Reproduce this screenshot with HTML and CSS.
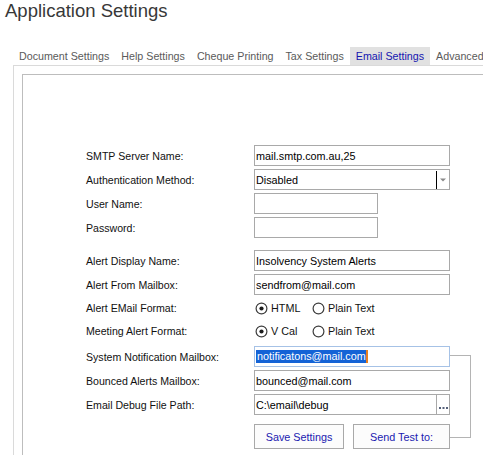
FILE: index.html
```html
<!DOCTYPE html>
<html lang="en">
<head>
<meta charset="utf-8">
<title>Application Settings</title>
<link rel="stylesheet" href="styles.css">
</head>
<body>
<h1 class="title">Application Settings</h1>
<nav class="tabs">
  <span class="tab">Document Settings</span>
  <span class="tab">Help Settings</span>
  <span class="tab">Cheque Printing</span>
  <span class="tab">Tax Settings</span>
  <span class="tab active">Email Settings</span>
  <span class="tab">Advanced</span>
</nav>
<div class="panel">
  <div class="pane">
    <div class="form">
      <div class="group">
        <span class="label">SMTP Server Name:</span>
        <div class="field">mail.smtp.com.au,25</div>
        <span class="label">Authentication Method:</span>
        <div class="field select">
          <span class="value">Disabled</span>
          <span class="drop"><svg width="6" height="4" viewBox="0 0 6 4"><path d="M0 0.5H6L3 3.5Z" fill="#8a8a8a"/></svg></span>
        </div>
        <span class="label">User Name:</span>
        <div class="field short"></div>
        <span class="label">Password:</span>
        <div class="field short"></div>
      </div>
      <div class="group g2">
        <span class="label">Alert Display Name:</span>
        <div class="field">Insolvency System Alerts</div>
        <span class="label">Alert From Mailbox:</span>
        <div class="field">sendfrom@mail.com</div>
        <span class="label">Alert EMail Format:</span>
        <div class="radios">
          <span class="radio first"><svg class="dot" width="13" height="13" viewBox="0 0 13 13"><circle cx="6.5" cy="6.5" r="5.4" fill="#fff" stroke="#3c3c3c" stroke-width="1.2"/><circle cx="6.5" cy="6.5" r="2.1" fill="#1c1c1c"/></svg>HTML</span>
          <span class="radio"><svg class="dot" width="13" height="13" viewBox="0 0 13 13"><circle cx="6.5" cy="6.5" r="5.4" fill="#fff" stroke="#3c3c3c" stroke-width="1.2"/></svg>Plain Text</span>
        </div>
        <span class="label">Meeting Alert Format:</span>
        <div class="radios">
          <span class="radio first"><svg class="dot" width="13" height="13" viewBox="0 0 13 13"><circle cx="6.5" cy="6.5" r="5.4" fill="#fff" stroke="#3c3c3c" stroke-width="1.2"/><circle cx="6.5" cy="6.5" r="2.1" fill="#1c1c1c"/></svg>V Cal</span>
          <span class="radio"><svg class="dot" width="13" height="13" viewBox="0 0 13 13"><circle cx="6.5" cy="6.5" r="5.4" fill="#fff" stroke="#3c3c3c" stroke-width="1.2"/></svg>Plain Text</span>
        </div>
      </div>
      <div class="group g3">
        <span class="label">System Notification Mailbox:</span>
        <div class="field focused"><span class="selected">notificatons@mail.com</span><span class="caret"></span></div>
        <span class="label">Bounced Alerts Mailbox:</span>
        <div class="field">bounced@mail.com</div>
        <span class="label">Email Debug File Path:</span>
        <div class="field browse">
          <span class="value">C:\email\debug</span>
          <span class="dots"><svg width="12" height="19" viewBox="0 0 12 19"><rect x="2" y="12" width="2" height="2" fill="#56617a"/><rect x="5.5" y="12" width="2" height="2" fill="#56617a"/><rect x="9" y="12" width="2" height="2" fill="#56617a"/></svg></span>
        </div>
      </div>
      <div class="group g4">
        <span class="label"></span>
        <div class="buttons">
          <button class="btn save">Save Settings</button>
          <button class="btn send">Send Test to:</button>
        </div>
      </div>
    </div>
    <span class="connector"></span>
  </div>
</div>
</body>
</html>
```
FILE: styles.css
```css
html, body {
  margin: 0;
  height: 455px;
  overflow: hidden;
  background: #fff;
}
body {
  display: flex;
  flex-direction: column;
  font-family: "Liberation Sans", Arial, sans-serif;
  color: #111;
}
.title {
  margin: 0;
  padding: 1px 0 0 5px;
  font-size: 18.5px;
  line-height: 20px;
  font-weight: normal;
  color: #383838;
}
.tabs {
  display: flex;
  margin: 26px 0 0 13px;
  height: 18px;
  white-space: nowrap;
}
.tab {
  padding: 0 6px;
  line-height: 18px;
  font-size: 10.7px;
  color: #5a5a5a;
}
.tab.active {
  background: #e1e1e1;
  color: #1414b0;
}
.panel {
  flex: 1;
  display: flex;
  flex-direction: column;
  margin-left: 13px;
  border-top: 1px solid #dadada;
  border-left: 1px solid #dadada;
  padding: 8px 0 0 8px;
}
.pane {
  flex: 1;
  position: relative;
  border-top: 1px solid #bdbdbd;
  border-left: 1px solid #bdbdbd;
  padding: 70px 0 0 63px;
}
.form {
  display: flex;
  flex-direction: column;
}
.group {
  display: grid;
  grid-template-columns: 168px 196px;
  row-gap: 3px;
  align-items: center;
}
.g2 { margin-top: 12px; }
.g3 { margin-top: 5px; }
.g4 { margin-top: 9px; }
.label {
  font-size: 10.6px;
  color: #111;
  white-space: nowrap;
}
.field {
  box-sizing: border-box;
  height: 21px;
  border: 1px solid #a9a9a9;
  background: #fff;
  display: flex;
  align-items: center;
  padding: 0 1px;
  font-size: 10.8px;
  color: #000;
  white-space: nowrap;
  overflow: hidden;
}
.field.short { width: 124px; }
.field .value { flex: 1; }
.select { padding-right: 0; }
.drop {
  width: 12px;
  align-self: stretch;
  margin: 1px 0 0;
  border-left: 1px solid #000;
  display: flex;
  align-items: center;
  justify-content: center;
}
.browse { padding-right: 0; }
.dots {
  width: 12px;
  align-self: stretch;
  border-left: 1px solid #a9a9a9;
  display: flex;
}
.focused {
  border-color: #a6c2e6;
}
.selected {
  background: #1463d6;
  color: #fff;
  line-height: 13px;
  padding: 0 0 0 1px;
}
.caret {
  width: 2px;
  height: 13px;
  background: #e8801e;
}
.radios {
  display: flex;
  align-items: center;
  height: 20px;
  font-size: 10.8px;
  color: #111;
}
.radio {
  display: flex;
  align-items: center;
  gap: 3px;
}
.radio.first { width: 57px; }
.dot { margin-left: 1px; }
.buttons {
  display: flex;
  gap: 9px;
}
.btn {
  height: 25px;
  border: 1px solid #a9a9a9;
  background: #fcfcfc;
  color: #1a1ab0;
  font-family: "Liberation Sans", Arial, sans-serif;
  font-size: 10.8px;
  padding: 0;
  margin: 0;
}
.save { width: 90px; }
.send { width: 97px; }
.connector {
  position: absolute;
  left: 427px;
  top: 280px;
  width: 20px;
  height: 81px;
  border: 1px solid #b4b4b4;
  border-left: none;
}
```
